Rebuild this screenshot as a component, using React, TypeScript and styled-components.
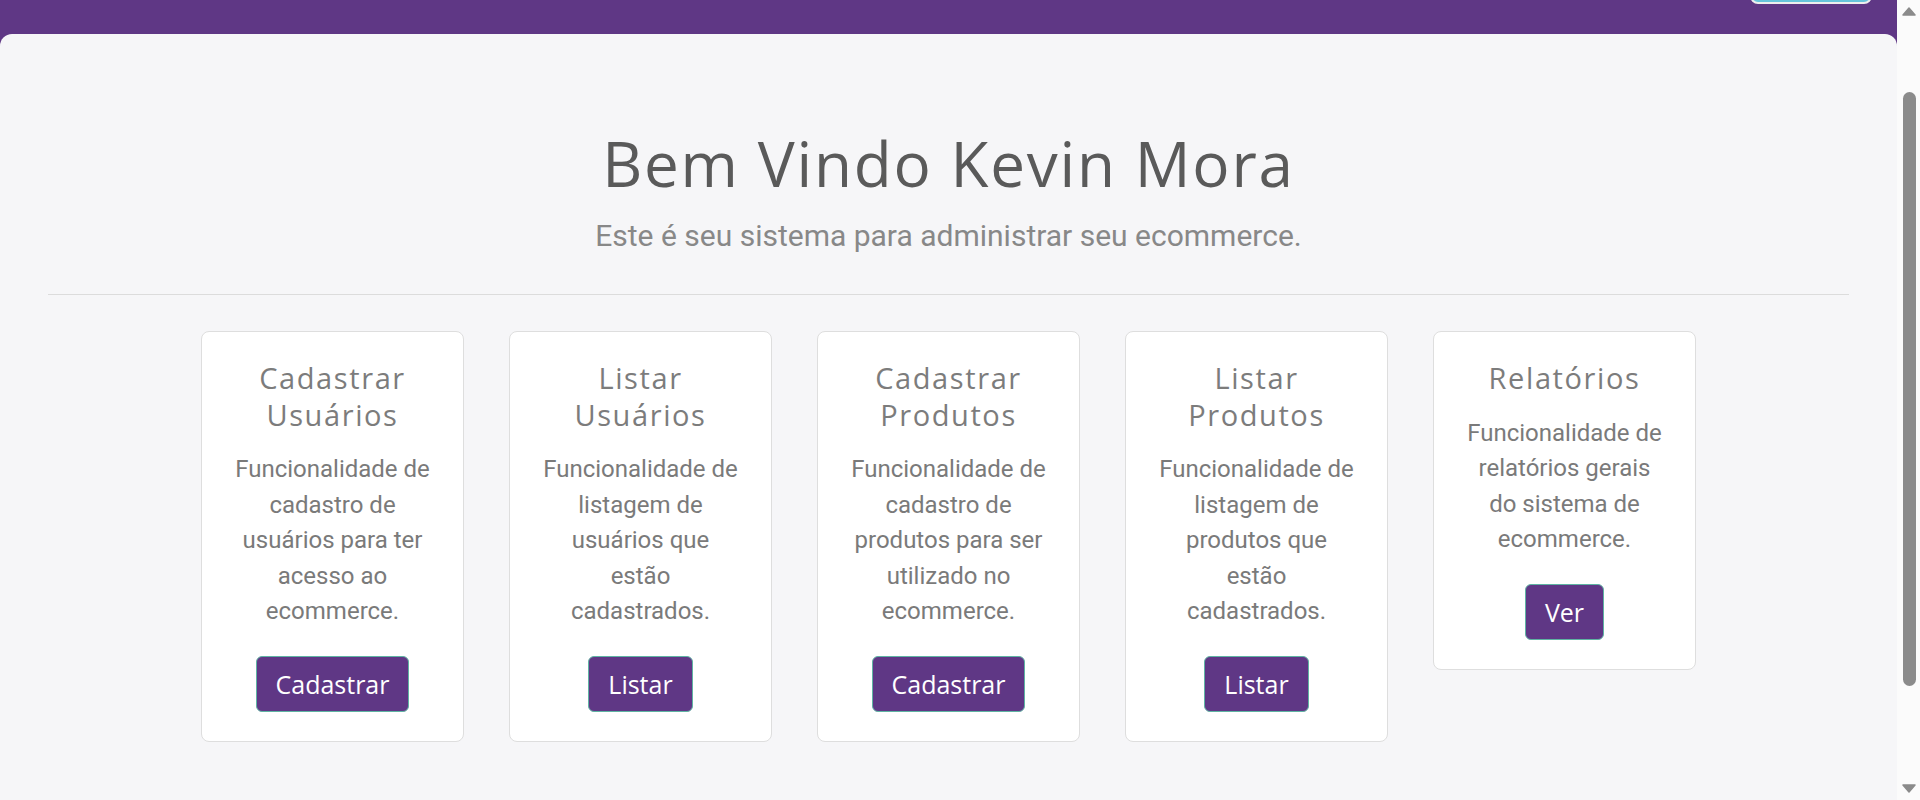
import React from "react";
import styled, { createGlobalStyle } from "styled-components";

const GlobalStyle = createGlobalStyle`
  html, body {
    margin: 0;
    height: 100%;
    overflow: hidden;
  }
  body {
    background: #f6f6f8;
    font-family: Roboto, "Liberation Sans", Arial, sans-serif;
  }
  * { box-sizing: border-box; }
`;

const Window = styled.div`
  display: flex;
  height: 100vh;
  overflow: hidden;
`;

const Viewport = styled.div`
  flex: 1;
  min-width: 0;
  display: flex;
  flex-direction: column;
  background: #5f3785;
  overflow: hidden;
`;

const TopBar = styled.header`
  flex: 0 0 34px;
  display: flex;
  justify-content: flex-end;
  align-items: flex-start;
  padding-right: 25px;
  overflow: hidden;
`;

const NavButton = styled.button`
  width: 122px;
  height: 40px;
  margin-top: -36px;
  border-radius: 8px;
  border: 2px solid #eeeeee;
  background: #67c4db;
`;

const Main = styled.main`
  flex: 1;
  background: #f6f6f8;
  border-radius: 12px 12px 0 0;
  padding: 92px 48px 40px;
`;

const Hero = styled.section`
  text-align: center;
`;

const Title = styled.h1`
  margin: 0;
  font-family: "Open Sans", "Noto Sans", sans-serif;
  font-weight: 400;
  font-size: 62px;
  line-height: 74px;
  letter-spacing: 1.8px;
  color: #5a5a5a;
`;

const Lead = styled.p`
  margin: 14px 0 0;
  font-family: Roboto, sans-serif;
  font-size: 30px;
  line-height: 43px;
  color: #888888;
`;

const Divider = styled.hr`
  margin: 37px 0 0;
  border: 0;
  border-top: 1px solid #dcdcdc;
`;

const CardRow = styled.div`
  display: flex;
  justify-content: center;
  align-items: flex-start;
  gap: 45px;
  margin-top: 36px;
`;

const Card = styled.article`
  width: 263px;
  background: #ffffff;
  border: 1px solid #dedede;
  border-radius: 8px;
  padding: 28px 30px 29px;
  display: flex;
  flex-direction: column;
  align-items: center;
  text-align: center;
`;

const CardTitle = styled.h3`
  margin: 0 0 19px;
  font-family: "Open Sans", "Noto Sans", sans-serif;
  font-weight: 400;
  font-size: 29px;
  line-height: 36.5px;
  letter-spacing: 1.6px;
  color: #7c7c7c;
`;

const CardText = styled.p`
  margin: 0 0 26px;
  font-family: Roboto, sans-serif;
  font-size: 24px;
  line-height: 35.5px;
  color: #7a7a7a;
`;

const ActionButton = styled.button`
  font-family: "Open Sans", "Noto Sans", sans-serif;
  font-size: 25px;
  line-height: 30px;
  padding: 12px 19px;
  background: #5f3785;
  color: #ffffff;
  border: 1px solid #5fb3a3;
  border-radius: 6px;
  cursor: pointer;
`;

const ScrollRail = styled.aside`
  flex: 0 0 23px;
  display: flex;
  flex-direction: column;
  align-items: center;
  background: #fbfbfb;
`;

const Arrow = styled.svg<{ $down?: boolean }>`
  display: block;
  margin-top: ${(p) => (p.$down ? "auto" : "7px")};
  margin-bottom: ${(p) => (p.$down ? "7px" : "0")};
  margin-left: 1px;
`;

const Thumb = styled.div`
  width: 13px;
  height: 594px;
  margin-top: 76px;
  margin-left: 1px;
  border-radius: 7px;
  background: #8b8b8b;
`;

const cards = [
  {
    title: "Cadastrar Usuários",
    text: "Funcionalidade de cadastro de usuários para ter acesso ao ecommerce.",
    action: "Cadastrar",
  },
  {
    title: "Listar Usuários",
    text: "Funcionalidade de listagem de usuários que estão cadastrados.",
    action: "Listar",
  },
  {
    title: "Cadastrar Produtos",
    text: "Funcionalidade de cadastro de produtos para ser utilizado no ecommerce.",
    action: "Cadastrar",
  },
  {
    title: "Listar Produtos",
    text: "Funcionalidade de listagem de produtos que estão cadastrados.",
    action: "Listar",
  },
  {
    title: "Relatórios",
    text: "Funcionalidade de relatórios gerais do sistema de ecommerce.",
    action: "Ver",
  },
];

export default function App() {
  return (
    <>
      <GlobalStyle />
      <Window>
        <Viewport>
          <TopBar>
            <NavButton aria-label="menu" />
          </TopBar>
          <Main>
            <Hero>
              <Title>Bem Vindo Kevin Mora</Title>
              <Lead>Este é seu sistema para administrar seu ecommerce.</Lead>
            </Hero>
            <Divider />
            <CardRow>
              {cards.map((c) => (
                <Card key={c.title}>
                  <CardTitle>{c.title}</CardTitle>
                  <CardText>{c.text}</CardText>
                  <ActionButton>{c.action}</ActionButton>
                </Card>
              ))}
            </CardRow>
          </Main>
        </Viewport>
        <ScrollRail>
          <Arrow width="14" height="9" viewBox="0 0 14 9">
            <polygon points="7,1 13,8 1,8" fill="#8b8b8b" stroke="#8b8b8b" strokeWidth="1.5" strokeLinejoin="round" />
          </Arrow>
          <Thumb />
          <Arrow $down width="14" height="9" viewBox="0 0 14 9">
            <polygon points="1,1 13,1 7,8" fill="#8b8b8b" stroke="#8b8b8b" strokeWidth="1.5" strokeLinejoin="round" />
          </Arrow>
        </ScrollRail>
      </Window>
    </>
  );
}
